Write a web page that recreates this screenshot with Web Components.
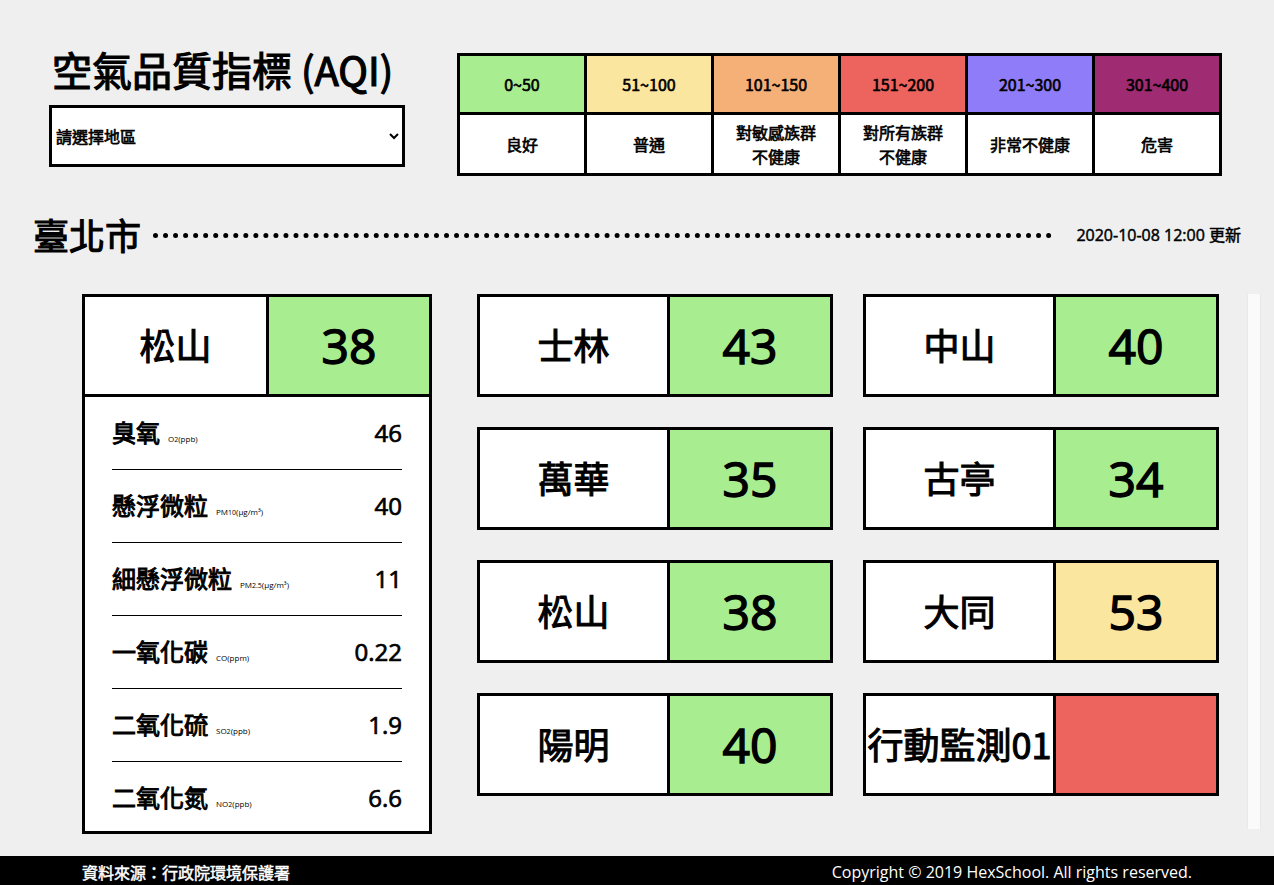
<!DOCTYPE html>
<html lang="zh-Hant">
<head>
<meta charset="utf-8">
<meta name="viewport" content="width=device-width, initial-scale=1">
<title>空氣品質指標 (AQI)</title>
<style>
  html, body { margin: 0; min-height: 100%; }
  body {
    --line: 3px solid #000;
    --good: #a8ee90;
    --moderate: #fae69e;
    --sensitive: #f4b077;
    --unhealthy: #ed635d;
    --very-unhealthy: #8f7cf9;
    --hazardous: #9f2b72;
    --heavy: .03em;
    --heavy-small: .04em;
    --cjk: "Noto Sans CJK TC", sans-serif;
    --latin: "Open Sans", "Noto Sans CJK TC", sans-serif;
    background: #efefef;
    color: #000;
    font: 400 16px/24px var(--cjk);
  }
</style>
</head>
<body>
<aqi-app></aqi-app>
<script>
  const define = (name, html, setup) => {
    const template = document.createElement('template');
    template.innerHTML = html;
    customElements.define(name, class extends HTMLElement {
      constructor() {
        super();
        this.attachShadow({ mode: 'open' }).append(template.content.cloneNode(true));
      }
      connectedCallback() { if (setup) setup(this); }
    });
  };

  define('aqi-region-picker', `
    <style>
      :host { display: block; }
      h1 { margin: 0 0 7px; padding-left: 3px; font: 400 40px/58px var(--cjk); white-space: nowrap; -webkit-text-stroke: var(--heavy); }
      select { display: block; box-sizing: border-box; width: 100%; height: 62px; border: var(--line);
        border-radius: 0; background: #fff; color: #000; font: 400 16px/24px var(--cjk); -webkit-text-stroke: var(--heavy-small); }
    </style>
    <h1>空氣品質指標 (AQI)</h1>
    <select aria-label="請選擇地區"><option>請選擇地區</option><option>臺北市</option></select>`);

  define('aqi-legend', `
    <style>
      :host { display: block; }
      table { width: 100%; border-collapse: collapse; table-layout: fixed; text-align: center; }
      th, td { box-sizing: border-box; padding: 0; border: var(--line); font: 400 16px/24px var(--cjk); -webkit-text-stroke: var(--heavy-small); }
      th { height: 59px; }
      td { height: 61px; background: #fff; }
    </style>
    <table>
      <thead><tr>
        <th style="background: var(--good)">0~50</th>
        <th style="background: var(--moderate)">51~100</th>
        <th style="background: var(--sensitive)">101~150</th>
        <th style="background: var(--unhealthy)">151~200</th>
        <th style="background: var(--very-unhealthy)">201~300</th>
        <th style="background: var(--hazardous)">301~400</th>
      </tr></thead>
      <tbody><tr>
        <td>良好</td><td>普通</td><td>對敏感族群<br>不健康</td><td>對所有族群<br>不健康</td><td>非常不健康</td><td>危害</td>
      </tr></tbody>
    </table>`);

  define('aqi-city-bar', `
    <style>
      :host { display: flex; align-items: center; }
      h2 { margin: 0; padding-bottom: 2px; font: 400 36px/52px var(--cjk); -webkit-text-stroke: var(--heavy); }
      i { flex: 1; margin: 0 24px 0 12px; border-top: 5px dotted #000; }
      time { font: 400 16px/24px var(--latin); -webkit-text-stroke: var(--heavy); }
    </style>
    <h2><slot name="city"></slot></h2><i></i><time><slot></slot></time>`);

  define('aqi-station', `
    <style>
      :host { display: flex; border: var(--line); background: #fff; height: 97px; text-align: center; }
      h3, output { margin: 0; display: flex; align-items: center; justify-content: center; -webkit-text-stroke: var(--heavy); }
      h3 { flex: 1; padding-bottom: 4px; font: 400 36px/52px var(--cjk); white-space: nowrap; min-width: 0; }
      output { flex: 0 0 160px; border-left: var(--line); background: var(--good); font: 400 48px/66px var(--latin); }
      :host([level="moderate"]) output { background: var(--moderate); }
      :host([level="unhealthy"]) output { background: var(--unhealthy); }
    </style>
    <h3><slot></slot></h3><output></output>`,
    el => { el.shadowRoot.querySelector('output').textContent = el.getAttribute('value') || ''; });

  define('aqi-reading', `
    <style>
      :host { display: flex; align-items: flex-start; padding: 18px 0; border-bottom: 1px solid #000; }
      :host(:last-child) { border-bottom: 0; padding-bottom: 15px; }
      .label { flex: 1; font: 400 24px/34px var(--cjk); }
      .name { -webkit-text-stroke: var(--heavy-small); }
      .unit { margin-left: 8px; font: 400 8px/12px var(--latin); }
      .value { font: 400 24px/36px var(--latin); -webkit-text-stroke: var(--heavy); }
    </style>
    <span class="label"><span class="name"><slot></slot></span><span class="unit"><slot name="unit"></slot></span></span>
    <span class="value"><slot name="value"></slot></span>`);

  define('aqi-detail', `
    <style>
      :host { display: block; box-sizing: border-box; border: var(--line); background: #fff; }
      aqi-station { border-width: 0 0 3px; }
      .list { padding: 0 27px; }
      small { font-size: 7px; }
    </style>
    <aqi-station value="38">松山</aqi-station>
    <div class="list">
      <aqi-reading>臭氧<span slot="unit">O<small>2</small>(ppb)</span><span slot="value">46</span></aqi-reading>
      <aqi-reading>懸浮微粒<span slot="unit">PM<small>10</small>(μg/m³)</span><span slot="value">40</span></aqi-reading>
      <aqi-reading>細懸浮微粒<span slot="unit">PM<small>2.5</small>(μg/m³)</span><span slot="value">11</span></aqi-reading>
      <aqi-reading>一氧化碳<span slot="unit">CO(ppm)</span><span slot="value">0.22</span></aqi-reading>
      <aqi-reading>二氧化硫<span slot="unit">SO<small>2</small>(ppb)</span><span slot="value">1.9</span></aqi-reading>
      <aqi-reading>二氧化氮<span slot="unit">NO<small>2</small>(ppb)</span><span slot="value">6.6</span></aqi-reading>
    </div>`);

  define('aqi-station-list', `
    <style>
      :host { display: flex; gap: 28px; }
      .grid { flex: 1; display: grid; grid-template-columns: 1fr 1fr; align-content: start; gap: 30px; }
      .track { box-sizing: border-box; width: 14px; margin-bottom: 5px; background: #fafafa;
        border: solid #e9e9e9; border-width: 0 1px; }
    </style>
    <div class="grid"><slot></slot></div><div class="track"></div>`);

  define('aqi-footer', `
    <style>
      :host { display: flex; justify-content: space-between; padding: 4px 82px 1px; background: #000; color: #fff; }
      .source { -webkit-text-stroke: var(--heavy); }
      .copy { font: 400 16px/24px var(--latin); }
    </style>
    <span class="source">資料來源：行政院環境保護署</span>
    <span class="copy">Copyright © 2019 HexSchool. All rights reserved.</span>`);

  define('aqi-app', `
    <style>
      :host { display: flex; flex-direction: column; min-height: 100vh; }
      header { display: flex; gap: 52px; padding: 40px 52px 0 49px; }
      aqi-region-picker { flex: 0 0 356px; }
      aqi-legend { flex: 1; margin-top: 13px; }
      aqi-city-bar { margin: 32px 33px 0; }
      main { display: flex; gap: 45px; padding: 32px 13px 22px 82px; }
      aqi-detail { flex: 0 0 350px; }
      aqi-station-list { flex: 1; }
      aqi-footer { margin-top: auto; }
    </style>
    <header><aqi-region-picker></aqi-region-picker><aqi-legend></aqi-legend></header>
    <aqi-city-bar><span slot="city">臺北市</span>2020-10-08 12:00 更新</aqi-city-bar>
    <main>
      <aqi-detail></aqi-detail>
      <aqi-station-list>
        <aqi-station value="43">士林</aqi-station>
        <aqi-station value="40">中山</aqi-station>
        <aqi-station value="35">萬華</aqi-station>
        <aqi-station value="34">古亭</aqi-station>
        <aqi-station value="38">松山</aqi-station>
        <aqi-station value="53" level="moderate">大同</aqi-station>
        <aqi-station value="40">陽明</aqi-station>
        <aqi-station level="unhealthy">行動監測01</aqi-station>
      </aqi-station-list>
    </main>
    <aqi-footer></aqi-footer>`);
</script>
</body>
</html>
